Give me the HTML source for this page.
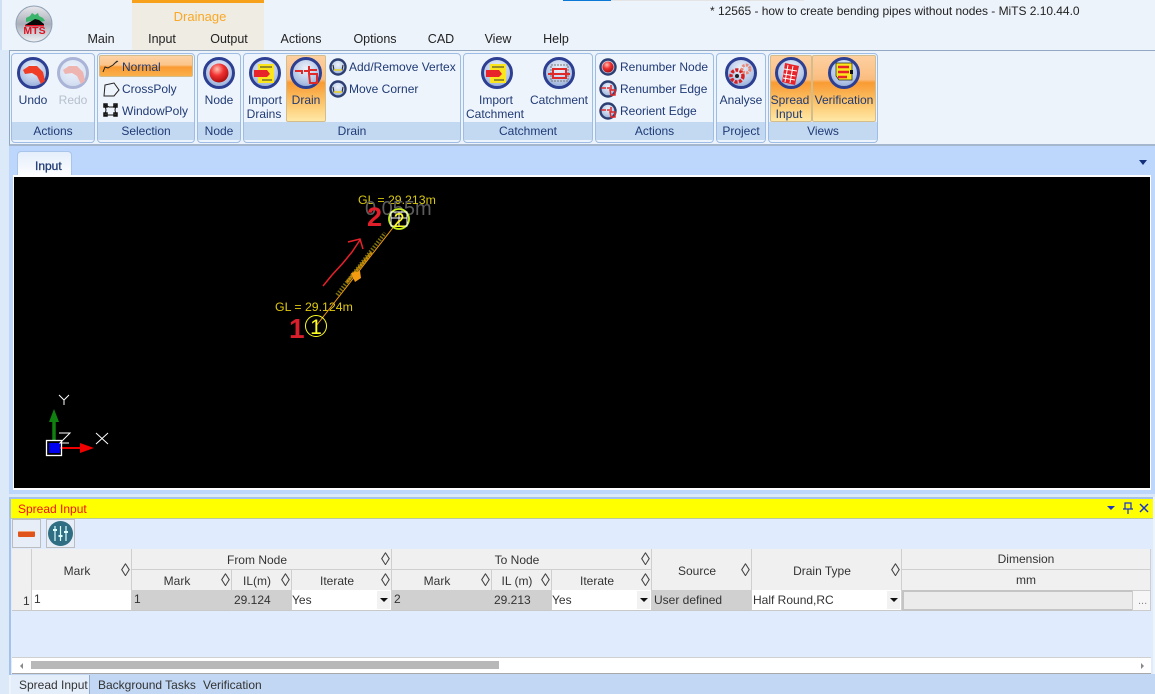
<!DOCTYPE html>
<html><head><meta charset="utf-8"><style>
html,body{margin:0;padding:0}
body{width:1155px;height:694px;overflow:hidden;position:relative;background:#edf3fb;font:12px "Liberation Sans",sans-serif;color:#1f3a75}
div{position:absolute;box-sizing:border-box}
.t{white-space:nowrap;line-height:14px}
.c{transform:translateX(-50%);text-align:center}
.tab{color:#222;top:32px;font-size:12.5px}
.g{top:53px;height:90px;border:1px solid #9dbde6;border-radius:4px;background:#eef4fc}
.gl{left:0;right:0;bottom:2px;height:18px;background:#c3d9f1;text-align:center;line-height:18px;color:#1f3a75}
.hot{background:linear-gradient(#fdd0a0 0,#fbbd80 36%,#f99b33 41%,#fcc268 70%,#ffe8a6 100%);border:1px solid #d3bd8c;border-radius:2px}
.h{background:#f0f0f0;border-right:1px solid #cfcfcf;border-bottom:1px solid #cfcfcf;color:#333;text-align:center;font-size:12px}
.s{font-size:18px;color:#444;position:absolute;top:50%;transform:translateY(-50%);line-height:18px;font-weight:normal}
.cell{top:590px;height:21px;border-bottom:1px solid #c8c8c8;border-right:1px solid #d0d0d0;color:#333;line-height:21px;padding-left:2px;white-space:nowrap}
.gr{background:#d0d0d0}.w{background:#fff}
.dd{top:591px;width:13px;height:18px;background:#f2f2f2}
.dd:after{content:"";position:absolute;left:3px;top:7px;border-left:4px solid transparent;border-right:4px solid transparent;border-top:4px solid #111}
svg{position:absolute;overflow:visible}
</style></head><body>
<svg width="0" height="0" style="position:absolute"><defs>
<radialGradient id="ri" cx=".5" cy=".35" r=".75"><stop offset="0" stop-color="#eef3fb"/><stop offset=".6" stop-color="#b5c7e6"/><stop offset="1" stop-color="#7f9ad0"/></radialGradient>
<radialGradient id="rd" cx=".4" cy=".3" r=".7"><stop offset="0" stop-color="#ffc0b0"/><stop offset=".5" stop-color="#f03030"/><stop offset="1" stop-color="#b01010"/></radialGradient>
<g id="ring"><circle cx="16" cy="16" r="14.5" fill="url(#ri)" stroke="#2d3f92" stroke-width="3"/></g>
<g id="ringS"><circle cx="10" cy="10" r="7.500" fill="url(#ri)" stroke="#2d3f72" stroke-width="2.400"/></g>
</defs></svg>

<div style="left:0;top:0;width:2px;height:694px;background:#cfe0f5"></div>
<div style="left:132px;top:0;width:132px;height:50px;background:#efece3;border-top:3px solid #f7a11a"></div>
<div style="left:563px;top:0;width:48px;height:1px;background:#0a78d7"></div>
<div style="left:611px;top:0;width:193px;height:1px;background:#e4e4e4"></div>
<div class="t c" style="left:200px;top:10px;color:#f9a825;font-size:13px">Drainage</div>
<div class="t" style="left:710px;top:4px;color:#222;font-size:12px;letter-spacing:-.03px">* 12565 - how to create bending pipes without nodes - MiTS 2.10.44.0</div>

<svg style="left:15px;top:5px" width="38" height="38"><defs><linearGradient id="lg" x1="0" y1="0" x2="0" y2="1"><stop offset="0" stop-color="#e8e8ec"/><stop offset=".5" stop-color="#a9aeb9"/><stop offset="1" stop-color="#f0f2f5"/></linearGradient></defs>
<circle cx="19" cy="19" r="18" fill="url(#lg)" stroke="#8fa1b5"/><path d="M11 13l4-2 2-3 3 2 3-2 1 3 4 2 2 3-6 1-8-1-5 1z" fill="#3ab56b"/><path d="M10 20l5-3 5-3 4 1 5 4v2H10z" fill="#0a0a0a"/><text x="19.500" y="29" font-size="10.500" font-weight="bold" fill="#e01020" text-anchor="middle" style="font-family:'Liberation Sans'">MTS</text><rect x="10" y="20" width="19" height="1.500" fill="#e01020"/></svg>

<div class="t c tab" style="left:101px">Main</div>
<div class="t c tab" style="left:162px">Input</div>
<div class="t c tab" style="left:229px">Output</div>
<div class="t c tab" style="left:301px">Actions</div>
<div class="t c tab" style="left:375px">Options</div>
<div class="t c tab" style="left:441px">CAD</div>
<div class="t c tab" style="left:498px">View</div>
<div class="t c tab" style="left:556px">Help</div>

<div style="left:0;top:50px;width:9px;height:644px;background:#dce9f8"></div>
<div style="left:9px;top:50px;width:1146px;height:96px;border-top:1px solid #92a7c2;border-left:1px solid #92a7c2;border-bottom:2px solid #a5b7cc;background:#edf3fb"></div>

<div class="g" style="left:11px;width:84px"><div class="gl">Actions</div></div>
<div class="g" style="left:97px;width:98px"><div class="gl">Selection</div></div>
<div class="g" style="left:197px;width:44px"><div class="gl">Node</div></div>
<div class="g" style="left:243px;width:218px"><div class="gl">Drain</div></div>
<div class="g" style="left:463px;width:130px"><div class="gl">Catchment</div></div>
<div class="g" style="left:595px;width:119px"><div class="gl">Actions</div></div>
<div class="g" style="left:716px;width:50px"><div class="gl">Project</div></div>
<div class="g" style="left:768px;width:110px"><div class="gl">Views</div></div>

<div class="hot" style="left:99px;top:55px;width:94px;height:22px;background:linear-gradient(#fdd3a5 0,#fcc48a 45%,#f99b33 55%,#fbb04a 100%)"></div>
<div class="hot" style="left:286px;top:55px;width:40px;height:67px"></div>
<div class="hot" style="left:770px;top:55px;width:42px;height:67px"></div>
<div class="hot" style="left:812px;top:55px;width:64px;height:67px"></div>

<!-- big icons -->
<svg style="left:17px;top:57px" width="32" height="32"><use href="#ring"/><path d="M6 13l6-4 8 0 6 6 2 9-4 3-4-8-5-3-7 1z" fill="#ef3e25"/></svg>
<svg style="left:57px;top:57px;opacity:.35" width="32" height="32"><use href="#ring"/><path d="M6 13l6-4 8 0 6 6 2 9-4 3-4-8-5-3-7 1z" fill="#ef3e25"/></svg>
<svg style="left:203px;top:57px" width="32" height="32"><use href="#ring"/><circle cx="16" cy="16" r="9.500" fill="url(#rd)"/></svg>
<svg style="left:249px;top:57px" width="32" height="32"><use href="#ring"/><rect x="9" y="7" width="16" height="19" fill="#fbe51c"/><path d="M5 13h13l3 4-3 3H5z" fill="#e8242a"/><path d="M11 10h12M13 23h10" stroke="#333"/></svg>
<svg style="left:290px;top:57px" width="32" height="32"><use href="#ring"/><path d="M5 14h8M14 14h4M20 13h7M19 9v8M12 14v3M19 17h8v9h-7z" fill="none" stroke="#e02a2a" stroke-width="2"/></svg>
<svg style="left:481px;top:57px" width="32" height="32"><use href="#ring"/><rect x="9" y="7" width="16" height="19" fill="#fbe51c"/><path d="M5 13h13l3 4-3 3H5z" fill="#e8242a"/><path d="M11 10h12M13 23h10" stroke="#333"/></svg>
<svg style="left:543px;top:57px" width="32" height="32"><use href="#ring"/><rect x="8" y="8" width="17" height="16" fill="none" stroke="#777" stroke-dasharray="2 1"/><rect x="10" y="12" width="13" height="9" fill="none" stroke="#e02a2a" stroke-width="2"/><path d="M5 17h22" stroke="#e02a2a" stroke-width="2"/></svg>
<svg style="left:725px;top:57px" width="32" height="32"><use href="#ring"/><circle cx="12" cy="19" r="6" fill="none" stroke="#d82020" stroke-width="3.500" stroke-dasharray="3 1.400"/><circle cx="12" cy="19" r="2" fill="#222"/><circle cx="21" cy="12" r="4" fill="none" stroke="#e88a7a" stroke-width="3" stroke-dasharray="2.500 1.200"/></svg>
<svg style="left:775px;top:57px" width="32" height="32"><use href="#ring"/><path d="M10 6l14 3-4 19-13-3z" fill="#e8242a"/><path d="M9 12l13 2M8.500 17l12 2M8 21l12 2M13 8l-3 17M18 9l-3 17" stroke="#fff" stroke-width="1"/></svg>
<svg style="left:828px;top:57px" width="32" height="32"><use href="#ring"/><path d="M8 6h16v17h-13l-3-4z" fill="#fbe51c" stroke="#222" stroke-width=".7"/><path d="M10 10h11M10 15h11M10 20h9" stroke="#e8242a" stroke-width="2.500"/><path d="M22 13l3 0v4h-3z" fill="#111"/></svg>

<!-- small icons -->
<svg style="left:328px;top:57px" width="20" height="20"><use href="#ringS"/><path d="M5 8l1 5h8l1-5" fill="none" stroke="#222"/><path d="M6 13h8" stroke="#e8d020" stroke-width="1.500"/></svg>
<svg style="left:328px;top:79px" width="20" height="20"><use href="#ringS"/><path d="M5 8l1 5h8l1-5" fill="none" stroke="#222"/><path d="M6 13h8" stroke="#e8d020" stroke-width="1.500"/></svg>
<svg style="left:598px;top:57px" width="20" height="20"><use href="#ringS"/><circle cx="10" cy="10" r="5.500" fill="url(#rd)"/></svg>
<svg style="left:598px;top:79px" width="20" height="20"><use href="#ringS"/><path d="M3 9h5M9 9h3M13 6v5M12 11h5v5h-4z" fill="none" stroke="#e02a2a" stroke-width="1.500"/></svg>
<svg style="left:598px;top:101px" width="20" height="20"><use href="#ringS"/><path d="M3 9h5M9 9h3M13 6v5M12 11h5v5h-4z" fill="none" stroke="#e02a2a" stroke-width="1.500"/></svg>

<svg style="left:102px;top:58px" width="20" height="17"><path d="M1 14l2-5 3 1 5-3 2-2 3-2" fill="none" stroke="#222"/><path d="M12 6l3-3" stroke="#333"/></svg>
<svg style="left:102px;top:80px" width="18" height="18"><path d="M3 5l9-2 5 7-5 6H2z" fill="none" stroke="#222"/></svg>
<svg style="left:103px;top:103px" width="15" height="15"><path d="M2 2l4 2h4l3-2-1 5 1 5H2l1-5z" fill="none" stroke="#111"/><path d="M1 1h3v3H1zM11 1h3v3h-3zM1 10h3v3H1zM11 10h3v3h-3z" fill="none" stroke="#111" stroke-width="1.500"/></svg>

<!-- ribbon text -->
<div class="t c" style="left:33px;top:93px">Undo</div>
<div class="t c" style="left:73px;top:93px;color:#b6bfcd">Redo</div>
<div class="t" style="left:122px;top:60px">Normal</div>
<div class="t" style="left:122px;top:82px">CrossPoly</div>
<div class="t" style="left:122px;top:104px">WindowPoly</div>
<div class="t c" style="left:219px;top:93px">Node</div>
<div class="t c" style="left:265px;top:93px">Import</div>
<div class="t c" style="left:264px;top:107px">Drains</div>
<div class="t c" style="left:306px;top:93px">Drain</div>
<div class="t" style="left:349px;top:60px">Add/Remove Vertex</div>
<div class="t" style="left:349px;top:82px">Move Corner</div>
<div class="t c" style="left:496px;top:93px">Import</div>
<div class="t c" style="left:495px;top:107px">Catchment</div>
<div class="t c" style="left:559px;top:93px">Catchment</div>
<div class="t" style="left:620px;top:60px">Renumber Node</div>
<div class="t" style="left:620px;top:82px">Renumber Edge</div>
<div class="t" style="left:620px;top:104px">Reorient Edge</div>
<div class="t c" style="left:741px;top:93px">Analyse</div>
<div class="t c" style="left:790px;top:93px">Spread</div>
<div class="t c" style="left:789px;top:107px">Input</div>
<div class="t c" style="left:844px;top:93px">Verification</div>

<!-- document area -->
<div style="left:9px;top:146px;width:1146px;height:348px;background:#bcd7fb"></div>
<div style="left:0;top:494px;width:1155px;height:3px;background:#dce9f8"></div>
<div style="left:17px;top:151px;width:55px;height:26px;background:linear-gradient(#e4eefb,#fdfeff);border:1px solid #a9c5ea;border-bottom:none;border-radius:4px 4px 0 0"></div>
<div class="t" style="left:35px;top:159px;font-size:12px;color:#1f3a75;-webkit-text-stroke:.3px #1f3a75">Input</div>
<div style="left:1139px;top:160px;border-left:4px solid transparent;border-right:4px solid transparent;border-top:5px solid #13307a"></div>
<div style="left:13px;top:175px;width:1138px;height:315px;background:#fff"></div>
<div style="left:14px;top:177px;width:1136px;height:311px;background:#000;overflow:hidden"></div>

<svg style="left:0;top:0" width="1155" height="694">
<text x="358" y="204" font-size="12.300" fill="#d8c80c" style="font-family:'Liberation Sans'">GL = 29.213m</text>
<text x="365" y="215" font-size="20" fill="#5c5c5c" style="font-family:'Liberation Sans'">0.055m</text>
<text x="367" y="226" font-size="27" font-weight="bold" fill="#e01f2b" style="font-family:'Liberation Sans'">2</text>
<text x="275" y="311" font-size="12.300" fill="#e0c80c" style="font-family:'Liberation Sans'">GL = 29.124m</text>
<text x="289" y="338" font-size="28" font-weight="bold" fill="#d81f2b" style="font-family:'Liberation Sans'">1</text>
<path d="M323 286L332 275 343 263 352 252 360 240M348 242L360 239 363 249" fill="none" stroke="#e8202a" stroke-width="1.500"/>
<path d="M316 326L399 220" stroke="#f39c12" stroke-width="1"/>
<path d="M337 295L385 233" stroke="#9c8c10" stroke-width="4" stroke-dasharray="1.500 1.500" opacity=".8"/>
<path d="M347 282L372 252" stroke="#c88a08" stroke-width="3" stroke-dasharray="2 1" />
<path d="M351 273l9-2 1 7-6 4z" fill="#f39c12"/>
<circle cx="316" cy="326" r="10.500" fill="none" stroke="#ffff20" stroke-width="1"/>
<text x="316" y="334" font-size="21" fill="#ffff20" text-anchor="middle" style="font-family:'Liberation Sans'">1</text>
<circle cx="399" cy="219" r="10" fill="none" stroke="#c8f020" stroke-width="1.800"/>
<rect x="391" y="212" width="16" height="14" fill="none" stroke="#fff" stroke-width="1"/>
<path d="M399 212v14M391 218h16" stroke="#fff"/>
<text x="399" y="227" font-size="20" fill="#ffff20" text-anchor="middle" style="font-family:'Liberation Sans'">2</text>
<!-- axes -->
<path d="M54 441v-22" stroke="#108010" stroke-width="3.500"/><path d="M54 409l-5 13h10z" fill="#108010"/>
<path d="M60 448h22" stroke="#f00000" stroke-width="2"/><path d="M80 443l14 5-14 5z" fill="#f00000"/>
<rect x="46.500" y="440.500" width="15" height="15" fill="none" stroke="#fff" stroke-width="1.300"/><rect x="49" y="443" width="11" height="10" fill="#0000ee"/>
<path d="M59 395l5 5 5-5M64 400v5M59 433h11l-10 10h9M96 433l12 11M108 433l-12 11" fill="none" stroke="#fff"/>
</svg>

<!-- panel -->
<div style="left:9px;top:497px;width:1146px;height:178px;background:#e0ecfd;border-left:2px solid #a5c2e8;border-top:2px solid #a5c2e8"></div>
<div style="left:1153px;top:497px;width:2px;height:178px;background:#edf3fb"></div>
<div style="left:11px;top:499px;width:1142px;height:20px;background:#ffff00;border-bottom:1px solid #b8c9a0"></div>
<div class="t" style="left:18px;top:502px;color:#f01010">Spread Input</div>
<div style="left:1107px;top:506px;border-left:4px solid transparent;border-right:4px solid transparent;border-top:4px solid #1a34c8"></div>
<svg style="left:1122px;top:501px" width="28" height="14"><path d="M3 2h6v6H3zM1 8h10M6 8v5" fill="none" stroke="#1a34c8" stroke-width="1.200"/><path d="M18 3l8 8M26 3l-8 8" stroke="#1a34c8" stroke-width="1.500"/></svg>

<div style="left:12px;top:519px;width:29px;height:29px;background:#e8eef7;border:1px solid #bdbdbd"></div>
<div style="left:18px;top:531px;width:17px;height:6px;background:#e0541c;border-radius:1px;border-top:1px solid #f0a070"></div>
<div style="left:46px;top:519px;width:29px;height:29px;background:#e8eef7;border:1px solid #bdbdbd"></div>
<svg style="left:47px;top:520px" width="27" height="27"><circle cx="13.500" cy="13.500" r="12.500" fill="#2f6e83"/><path d="M8 6v15M13.500 6v15M19 6v15" stroke="#dff" stroke-width="1.200"/><path d="M6 10h4M11.500 16h4M17 12h4" stroke="#dff" stroke-width="2"/></svg>

<!-- grid header -->
<div class="h" style="left:12px;top:549px;width:20px;height:42px"></div>
<div class="h" style="left:32px;top:549px;width:100px;height:42px;line-height:44px;padding-right:9px">Mark<span class="s" style="left:89px">◊</span></div>
<div class="h" style="left:132px;top:549px;width:260px;height:21px;line-height:23px;padding-right:9px">From Node<span class="s" style="left:249px">◊</span></div>
<div class="h" style="left:392px;top:549px;width:260px;height:21px;line-height:23px;padding-right:9px">To Node<span class="s" style="left:249px">◊</span></div>
<div class="h" style="left:132px;top:570px;width:100px;height:21px;line-height:23px;padding-right:9px">Mark<span class="s" style="left:89px">◊</span></div>
<div class="h" style="left:232px;top:570px;width:60px;height:21px;line-height:23px;padding-right:9px">IL(m)<span class="s" style="left:49px">◊</span></div>
<div class="h" style="left:292px;top:570px;width:100px;height:21px;line-height:23px;padding-right:9px">Iterate<span class="s" style="left:89px">◊</span></div>
<div class="h" style="left:392px;top:570px;width:100px;height:21px;line-height:23px;padding-right:9px">Mark<span class="s" style="left:89px">◊</span></div>
<div class="h" style="left:492px;top:570px;width:60px;height:21px;line-height:23px;padding-right:9px">IL (m)<span class="s" style="left:49px">◊</span></div>
<div class="h" style="left:552px;top:570px;width:100px;height:21px;line-height:23px;padding-right:9px">Iterate<span class="s" style="left:89px">◊</span></div>
<div class="h" style="left:652px;top:549px;width:100px;height:42px;line-height:44px;padding-right:9px">Source<span class="s" style="left:89px">◊</span></div>
<div class="h" style="left:752px;top:549px;width:150px;height:42px;line-height:44px;padding-right:9px">Drain Type<span class="s" style="left:139px">◊</span></div>
<div class="h" style="left:902px;top:549px;width:249px;height:21px;line-height:20px">Dimension</div>
<div class="h" style="left:902px;top:570px;width:249px;height:21px;line-height:20px;padding-right:0">mm</div>

<!-- row -->
<div class="cell" style="left:12px;width:20px;background:#f0f0f0;padding:1px 0 0 11px;line-height:20px">1</div>
<div class="cell w" style="left:32px;width:100px;line-height:18px">1</div>
<div class="cell gr" style="left:132px;width:100px;line-height:18px">1</div>
<div class="cell gr" style="left:232px;width:60px">29.124</div>
<div class="cell w" style="left:292px;width:100px;padding-left:0">Yes</div>
<div class="dd" style="left:377px"></div>
<div class="cell gr" style="left:392px;width:100px;line-height:18px">2</div>
<div class="cell gr" style="left:492px;width:60px">29.213</div>
<div class="cell w" style="left:552px;width:100px;padding-left:0">Yes</div>
<div class="dd" style="left:637px"></div>
<div class="cell gr" style="left:652px;width:100px">User defined</div>
<div class="cell w" style="left:752px;width:150px;padding-left:1px">Half Round,RC</div>
<div class="dd" style="left:887px"></div>
<div class="cell" style="left:902px;width:230px;background:#ebebeb;border:2px solid #c4c4c4;border-width:2px 0 2px 2px"></div>
<div class="cell w" style="left:1132px;width:19px;background:#f6f6f6;border:1px solid #ccc;color:#888;padding-left:5px;line-height:21px;font-size:11px">...</div>

<!-- scrollbar -->
<div style="left:12px;top:657px;width:1139px;height:17px;background:#fff;border-top:1px solid #d0d0d0;border-bottom:1px solid #a8a8a8"></div>
<div style="left:31px;top:661px;width:468px;height:8px;background:#b8b8b8"></div>
<div style="left:20px;top:663px;border-top:3px solid transparent;border-bottom:3px solid transparent;border-right:3px solid #888"></div>
<div style="left:1141px;top:663px;border-top:3px solid transparent;border-bottom:3px solid transparent;border-left:3px solid #888"></div>

<!-- bottom tabs -->
<div style="left:11px;top:674px;width:1144px;height:20px;background:#c1d7f3"></div>
<div style="left:11px;top:675px;width:79px;height:19px;background:#e4eefb;border-right:1px solid #8fa9cc"></div>
<div class="t" style="left:19px;top:678px;color:#333">Spread Input</div>
<div class="t" style="left:98px;top:678px;color:#333">Background Tasks</div>
<div class="t" style="left:203px;top:678px;color:#333">Verification</div>
</body></html>
